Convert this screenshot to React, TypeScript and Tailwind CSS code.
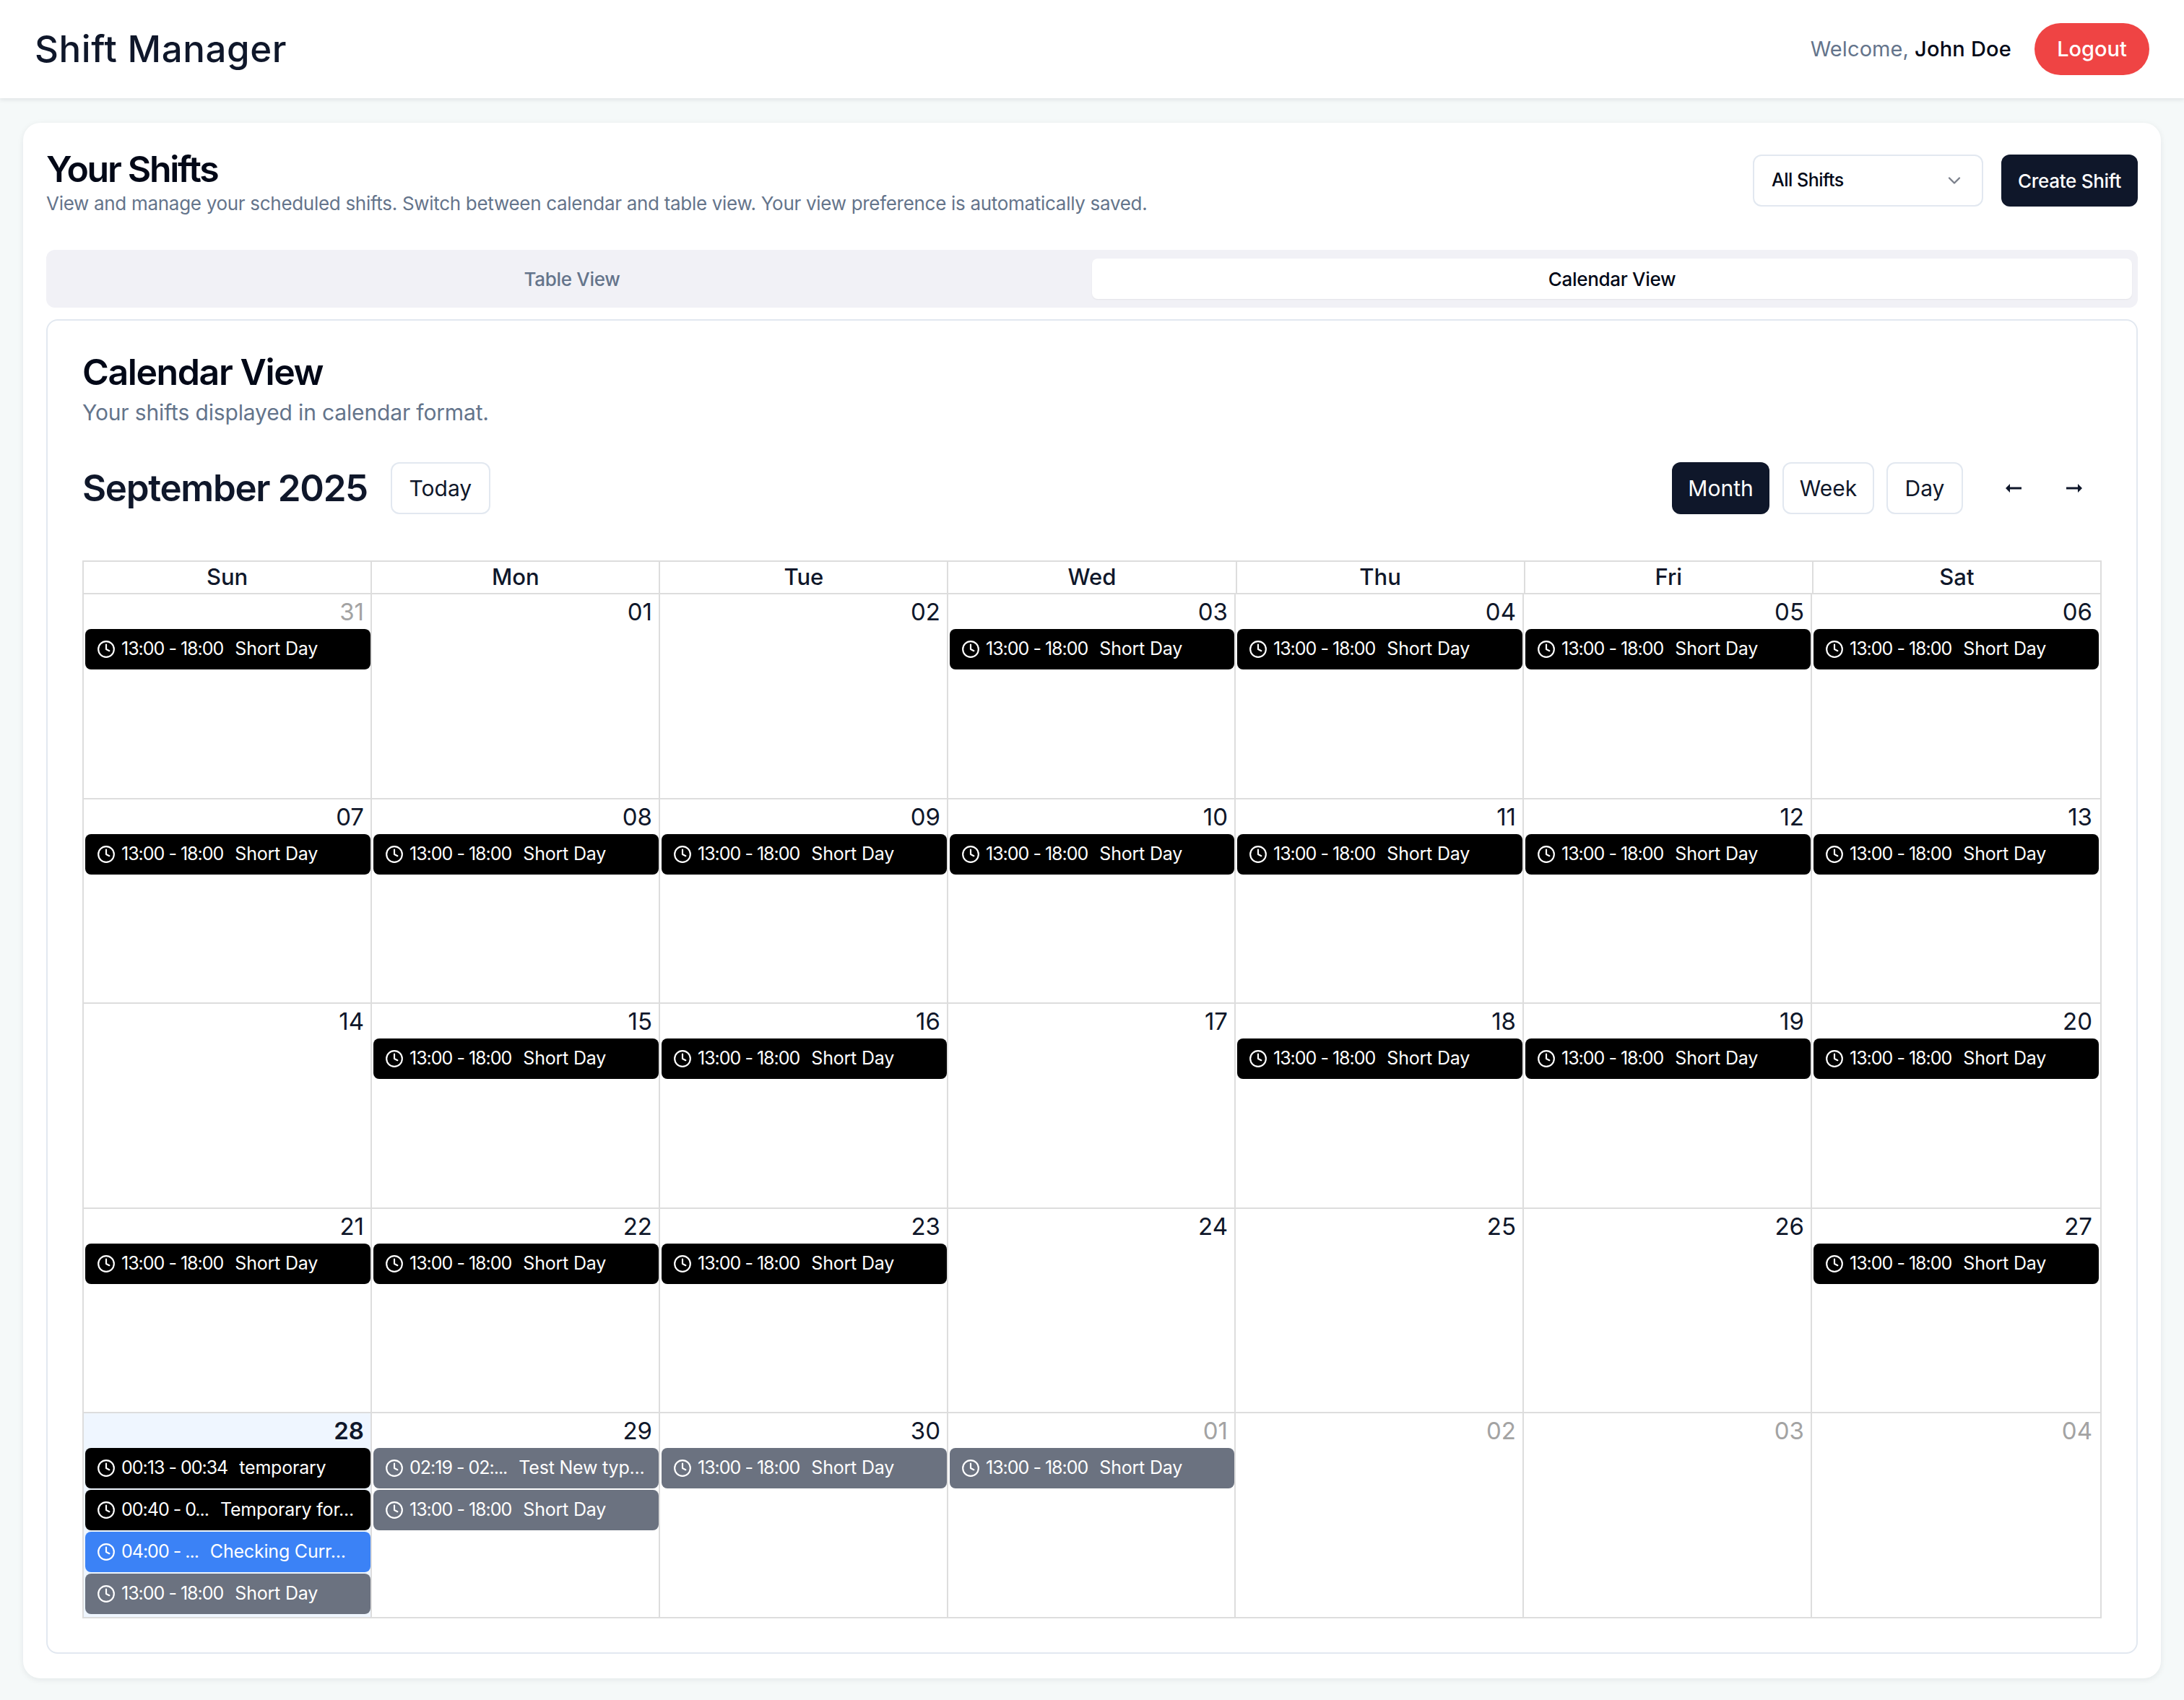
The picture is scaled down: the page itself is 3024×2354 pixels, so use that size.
import { ChevronDown, Clock } from "lucide-react";

type Shift = { time: string; title: string; color: string };

const BLACK = "bg-black";
const GRAY = "bg-[#6b7280]";
const BLUE = "bg-[#3b82f6]";
const shortDay = (color: string): Shift => ({ time: "13:00 - 18:00", title: "Short Day", color });

type Day = { label: string; muted?: boolean; today?: boolean; shifts?: Shift[] };

const black = [shortDay(BLACK)];
const gray = [shortDay(GRAY)];

const days: Day[] = [
  { label: "31", muted: true, shifts: black },
  { label: "01" },
  { label: "02" },
  { label: "03", shifts: black },
  { label: "04", shifts: black },
  { label: "05", shifts: black },
  { label: "06", shifts: black },
  { label: "07", shifts: black },
  { label: "08", shifts: black },
  { label: "09", shifts: black },
  { label: "10", shifts: black },
  { label: "11", shifts: black },
  { label: "12", shifts: black },
  { label: "13", shifts: black },
  { label: "14" },
  { label: "15", shifts: black },
  { label: "16", shifts: black },
  { label: "17" },
  { label: "18", shifts: black },
  { label: "19", shifts: black },
  { label: "20", shifts: black },
  { label: "21", shifts: black },
  { label: "22", shifts: black },
  { label: "23", shifts: black },
  { label: "24" },
  { label: "25" },
  { label: "26" },
  { label: "27", shifts: black },
  {
    label: "28",
    today: true,
    shifts: [
      { time: "00:13 - 00:34", title: "temporary", color: BLACK },
      { time: "00:40 - 0...", title: "Temporary for...", color: BLACK },
      { time: "04:00 - ...", title: "Checking Curr...", color: BLUE },
      shortDay(GRAY),
    ],
  },
  {
    label: "29",
    shifts: [{ time: "02:19 - 02:...", title: "Test New typ...", color: GRAY }, shortDay(GRAY)],
  },
  { label: "30", shifts: gray },
  { label: "01", muted: true, shifts: gray },
  { label: "02", muted: true },
  { label: "03", muted: true },
  { label: "04", muted: true },
];

const weekdays = ["Sun", "Mon", "Tue", "Wed", "Thu", "Fri", "Sat"];

function ShiftPill({ shift }: { shift: Shift }) {
  return (
    <div
      className={`ml-[2px] flex h-[56px] items-center whitespace-nowrap rounded-[8px] pl-[16px] text-[25px] text-white ${shift.color}`}
    >
      <Clock className="h-[26px] w-[26px] shrink-0" strokeWidth={2} />
      <span className="ml-[8px] tracking-[-1px]">{shift.time}</span>
      <span className="ml-[16px] tracking-[-0.2px]">{shift.title}</span>
    </div>
  );
}

function DayCell({ day, last }: { day: Day; last: boolean }) {
  return (
    <div
      className={`h-[283.5px] border-r-2 border-b-2 border-[#dddddd] ${day.today ? "bg-[#eff6ff]" : ""} ${
        last ? "pr-[2px]" : ""
      }`}
    >
      <div
        className={`h-[48px] pr-[9px] pt-[2px] text-right text-[33px] leading-[44px] ${
          day.muted ? "text-[#a3a3a3]" : "text-[#0f172a]"
        } ${day.today ? "font-semibold" : ""}`}
      >
        {day.label}
      </div>
      <div className="flex flex-col gap-[2px]">
        {day.shifts?.map((shift, i) => <ShiftPill key={i} shift={shift} />)}
      </div>
    </div>
  );
}

function OutlineButton({ label, className }: { label: string; className: string }) {
  return (
    <button
      className={`flex h-[72px] items-center justify-center rounded-[12px] border-2 border-[#e2e8f0] bg-white text-[30px] text-[#0f172a] ${className}`}
    >
      {label}
    </button>
  );
}

function NavArrow({ flip, className }: { flip?: boolean; className: string }) {
  return (
    <svg
      viewBox="0 0 22 16"
      className={`h-[16px] w-[22px] fill-[#0f172a] ${flip ? "-scale-x-100" : ""} ${className}`}
    >
      <path d="M0 8 L6 2 V6.5 H22 V9.5 H6 V14 Z" />
    </svg>
  );
}

export default function App() {
  return (
    <div className="min-h-[2354px] bg-[#f5f9f9] font-['Inter',sans-serif] text-[#0f172a]">
      <header className="flex h-[136px] items-center justify-between bg-white pl-[48px] pr-[48px] shadow-[0_2px_6px_rgba(15,23,42,0.10)]">
        <h1 className="text-[51px] font-medium tracking-[0.6px]">Shift Manager</h1>
        <div className="flex items-center">
          <span className="text-[29px] tracking-[0.1px] text-[#64748b]">Welcome,</span>
          <span className="ml-[8px] text-[29px] font-medium tracking-[0.2px] text-[#020817]">John Doe</span>
          <button className="ml-[32px] h-[72px] w-[159px] rounded-[36px] bg-[#ef4444] text-[29px] font-medium text-white">
            Logout
          </button>
        </div>
      </header>

      <main className="px-[32px] pb-[32px] pt-[34px]">
        <section className="rounded-[24px] bg-white px-[32px] pb-[34px] pt-[36px] shadow-[0_2px_8px_rgba(15,23,42,0.08)]">
          <div className="mb-[48px] flex h-[92px] items-start justify-between">
            <div>
              <h2 className="mt-[2px] text-[50px] font-semibold leading-[52px] tracking-[-2.3px] text-[#020817]">
                Your Shifts
              </h2>
              <p className="mt-[2px] text-[26px] leading-[40px] tracking-[-0.3px] text-[#64748b]">
                View and manage your scheduled shifts. Switch between calendar and table view. Your view preference is
                automatically saved.
              </p>
            </div>
            <div className="mt-[8px] flex items-center gap-[25px]">
              <div className="flex h-[72px] w-[319px] items-center justify-between rounded-[12px] border-2 border-[#e2e8f0] bg-white pl-[24px] pr-[24px] text-[25px] font-medium tracking-[-0.5px] text-[#020817]">
                All Shifts
                <ChevronDown className="h-[28px] w-[28px] text-[#7a7f8a]" strokeWidth={2} />
              </div>
              <button className="h-[72px] w-[189px] rounded-[12px] bg-[#0f172a] text-[26px] font-medium tracking-[-0.3px] text-white">
                Create Shift
              </button>
            </div>
          </div>

          <div className="grid h-[80px] grid-cols-2 rounded-[12px] bg-[#f1f1f6] px-[8px] py-[12px]">
            <div className="flex items-center justify-center text-[26px] font-medium tracking-[-0.3px] text-[#64748b]">
              Table View
            </div>
            <div className="flex items-center justify-center rounded-[8px] bg-white text-[26px] font-medium tracking-[-0.3px] text-[#020817] shadow-[0_1px_2px_rgba(0,0,0,0.06)]">
              Calendar View
            </div>
          </div>

          <div className="mt-[16px] rounded-[16px] border-2 border-[#e2e8f0] bg-white px-[48px] pb-[47px] pt-[43px]">
            <h3 className="text-[50px] font-semibold leading-[56px] tracking-[-1.4px] text-[#020817]">Calendar View</h3>
            <p className="mt-[4px] text-[30px] leading-[48px] tracking-[-0.15px] text-[#64748b]">
              Your shifts displayed in calendar format.
            </p>

            <div className="mt-[45px] flex h-[72px] items-center">
              <h4 className="text-[51px] font-semibold tracking-[-1.3px] text-[#0f172a]">September 2025</h4>
              <OutlineButton label="Today" className="ml-[32px] w-[138px]" />
              <div className="ml-auto flex items-center">
                <button className="h-[72px] w-[135px] rounded-[12px] bg-[#0f172a] text-[30px] text-white">Month</button>
                <OutlineButton label="Week" className="ml-[18px] w-[127px]" />
                <OutlineButton label="Day" className="ml-[17px] w-[106px]" />
                <NavArrow className="ml-[59px]" />
                <NavArrow flip className="ml-[62px] mr-[27px]" />
              </div>
            </div>

            <div className="mt-[64px] border-l-2 border-t-2 border-[#dddddd]">
              <div className="grid grid-cols-7">
                {weekdays.map((name) => (
                  <div
                    key={name}
                    className="flex h-[45px] items-center justify-center border-r-2 border-b-2 border-[#dddddd] text-[31px] font-medium"
                  >
                    {name}
                  </div>
                ))}
              </div>
              <div className="grid grid-cols-[399px_399px_399px_398px_399px_399px_1fr]">
                {days.map((day, i) => (
                  <DayCell key={i} day={day} last={i % 7 === 6} />
                ))}
              </div>
            </div>
          </div>
        </section>
      </main>
    </div>
  );
}
